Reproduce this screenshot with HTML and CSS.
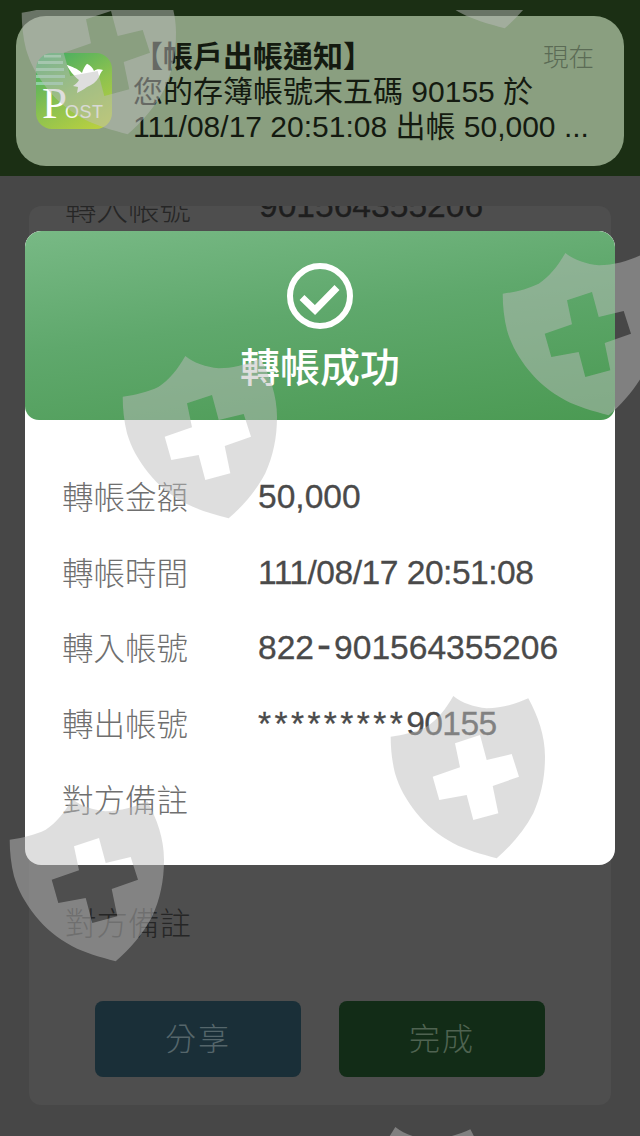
FILE: index.html
```html
<!DOCTYPE html>
<html lang="zh-Hant">
<head>
<meta charset="utf-8">
<title>轉帳成功</title>
<link rel="stylesheet" href="styles.css">
</head>
<body>
<svg class="defs" width="0" height="0" aria-hidden="true">
  <symbol id="shield" viewBox="0 0 160 170">
    <path fill-rule="evenodd" d="M63.3 0C72 7 84 11 96.7 12.3C112 12 126 8 138.3 2.3C148 20 155 40 155 60.7C155 82 151 100 143.3 117.3C134 135 121 150 106.7 162.3C91 158 76 154 63.3 147.3C48 139 36 129 26.7 117.3C16 104 9 91 5 77.3C2 65 0.7 53 0.7 40.7C13 39 26 36 36.7 30.7C47 24 56 13 63.3 0ZM65 47.3L90 39L96.7 64L121.7 58L129 80.7L102.7 90L108.3 117.3L83.3 124L76.7 99L49.3 104L42.7 80.7L70 71.3Z"/>
  </symbol>
</svg>
<div class="app">
  <header class="topbar"></header>
  <main class="page">
    <section class="card">
      <div class="row row-clipped">
        <span class="back-label">轉入帳號</span>
        <span class="back-value">901564355206</span>
      </div>
      <div class="row row-note">
        <span class="back-label">對方備註</span>
      </div>
      <div class="actions">
        <button class="btn btn-share">分享</button>
        <button class="btn btn-done">完成</button>
      </div>
    </section>
  </main>
</div>

<section class="modal">
  <div class="modal-head">
    <svg class="check" viewBox="0 0 66 66">
      <circle cx="33" cy="33" r="30" fill="none" stroke="#fff" stroke-width="6"/>
      <path d="M15 34.500L28 47L50 24.500" fill="none" stroke="#fff" stroke-width="7"/>
    </svg>
    <h1 class="modal-title">轉帳成功</h1>
  </div>
  <dl class="details">
    <div class="detail"><dt>轉帳金額</dt><dd>50,000</dd></div>
    <div class="detail"><dt>轉帳時間</dt><dd class="value-time">111/08/17 20:51:08</dd></div>
    <div class="detail"><dt>轉入帳號</dt><dd>822<span class="value-hyphen">-</span>901564355206</dd></div>
    <div class="detail"><dt>轉出帳號</dt><dd class="value-account"><span class="value-stars">*********</span>90155</dd></div>
    <div class="detail"><dt>對方備註</dt><dd></dd></div>
  </dl>
</section>

<aside class="notice">
  <svg class="app-icon" viewBox="0 0 76 76">
    <defs>
      <linearGradient id="icon-bg" x1="0.2" y1="0" x2="0.8" y2="1">
        <stop offset="0" stop-color="#45ad62"/>
        <stop offset="0.55" stop-color="#8ec24f"/>
        <stop offset="1" stop-color="#b9d040"/>
      </linearGradient>
    </defs>
    <rect width="76" height="76" rx="16" fill="url(#icon-bg)"/>
    <g fill="#8fd0a2">
      <rect x="8" y="2" width="17" height="2.500"/>
      <rect x="2" y="8" width="25" height="3"/>
      <rect x="0" y="15" width="28" height="3"/>
      <rect x="0" y="22" width="29" height="3"/>
      <rect x="0" y="29" width="27" height="3"/>
    </g>
    <path fill="#fff" d="M30.700 11.700C36 14 41 15 46 20C47 16 49 13 51 10.700C54 12 57 15 58 18C60 16 64 16 67 17C65 19 64 21 63 24C60 29 56 32 51 34C47 37 44 38 41 40L42 34L37 33C40 31 42 29 43 27C38 23 33 17 30.700 11.700Z"/>
    <text class="icon-p" x="6" y="65">P</text>
    <text class="icon-ost" x="29" y="65">OST</text>
  </svg>
  <div class="notice-body">
    <div class="notice-head">
      <strong class="notice-title">【帳戶出帳通知】</strong>
      <span class="notice-time">現在</span>
    </div>
    <p class="notice-line">您的存簿帳號末五碼 90155 於</p>
    <p class="notice-line">111/08/17 20:51:08 出帳 50,000 ...</p>
  </div>
</aside>

<div class="watermarks" aria-hidden="true">
  <svg class="mark mark-a"><use href="#shield"/></svg>
  <svg class="mark mark-b"><use href="#shield"/></svg>
  <svg class="mark mark-c"><use href="#shield"/></svg>
  <svg class="mark mark-d"><use href="#shield"/></svg>
  <svg class="mark mark-e"><use href="#shield"/></svg>
  <svg class="mark mark-f"><use href="#shield"/></svg>
  <svg class="mark mark-g"><use href="#shield"/></svg>
</div>
</body>
</html>
```
FILE: styles.css
```css
* { box-sizing: border-box; }
html, body { margin: 0; padding: 0; }
body {
  position: relative;
  width: 640px;
  height: 1136px;
  overflow: hidden;
  background: #474747;
  font-family: "Liberation Sans", "Noto Sans CJK TC", sans-serif;
}
.defs { position: absolute; }
.app { display: flex; flex-direction: column; height: 1136px; }
.topbar { height: 176px; background: #1b2f14; }
.page { flex: 1; padding: 30px 29px 31px; display: flex; }
.card {
  flex: 1;
  display: flex;
  flex-direction: column;
  background: #4e4e4e;
  border-radius: 12px;
  overflow: hidden;
}
.row { display: flex; align-items: center; height: 40px; padding-left: 36px; }
.row-clipped { margin-top: -20px; }
.row-note { margin-top: 675px; }
.back-label {
  width: 194px;
  font-size: 31.500px;
  font-family: "Noto Sans CJK TC", sans-serif;
  font-weight: 300;
  color: #262626;
}
.back-value { font-size: 33.600px; color: #1e1e1e; -webkit-text-stroke: 0.3px #1e1e1e; }
.actions { display: flex; gap: 38px; padding-left: 66px; margin-top: 60px; }
.btn {
  width: 206px;
  height: 76px;
  padding: 0 0 5px;
  border: 0;
  border-radius: 8px;
  font-family: "Noto Sans CJK TC", sans-serif;
  font-weight: 300;
  font-size: 31px;
  letter-spacing: 2px;
}
.btn-share { background: #1a2f38; color: #55666b; }
.btn-done { background: #122c17; color: #4f6351; }

.modal {
  position: absolute;
  left: 25px;
  top: 231px;
  width: 590px;
  height: 634px;
  background: #fff;
  border-radius: 16px;
  overflow: hidden;
}
.modal-head {
  height: 189px;
  display: flex;
  flex-direction: column;
  align-items: center;
  padding-top: 32px;
  background: linear-gradient(172deg, #78b985 0%, #5fa86c 45%, #4b9a53 100%);
  border-radius: 16px 16px 14px 14px;
}
.check { width: 66px; height: 66px; display: block; }
.modal-title {
  margin: 13px 0 0;
  font-family: "Noto Sans CJK TC", sans-serif;
  font-weight: 500;
  font-size: 40px;
  line-height: 46px;
  color: #fff;
}
.details { margin: 0; padding: 39px 0 0 37px; }
.detail { display: flex; align-items: center; height: 75.800px; }
.detail dt {
  width: 196px;
  margin-top: -4px;
  font-family: "Noto Sans CJK TC", sans-serif;
  font-weight: 300;
  font-size: 31.500px;
  color: #6f6f6f;
}
.detail dd {
  margin: 0;
  height: 40px;
  line-height: 40px;
  font-size: 33.600px;
  color: #4a4a4a;
  -webkit-text-stroke: 0.3px #4a4a4a;
}
.detail .value-time { letter-spacing: -0.5px; }
.detail .value-account { letter-spacing: -0.6px; }
.value-hyphen { padding: 0 3px; font-size: 42px; line-height: 0; }
.value-stars { letter-spacing: 3.400px; }

.notice {
  position: absolute;
  left: 16px;
  top: 16px;
  width: 608px;
  height: 150px;
  display: flex;
  padding: 37px 30px 0 20px;
  background: #8a9f80;
  border-radius: 30px;
}
.app-icon { width: 76px; height: 76px; flex: none; display: block; }
.icon-p { font-family: "Liberation Serif", serif; font-size: 45px; fill: #fff; }
.icon-ost { font-family: "Liberation Sans", sans-serif; font-size: 18px; fill: #f4f6ee; letter-spacing: 0.5px; }
.notice-body { flex: 1; margin: -18px 0 0 21px; color: #141a10; }
.notice-head { display: flex; justify-content: space-between; align-items: center; height: 39px; }
.notice-title { font-family: "Noto Sans CJK TC", sans-serif; font-weight: 700; font-size: 30px; line-height: 39px; white-space: nowrap; }
.notice-time {
  font-family: "Noto Sans CJK TC", sans-serif;
  font-weight: 300;
  font-size: 25.500px;
  color: #5b6b55;
}
.notice-line {
  margin: 0;
  height: 35px;
  line-height: 35px;
  white-space: nowrap;
  font-size: 30px;
  font-family: "Liberation Sans", "Noto Sans CJK TC", sans-serif;
}

.watermarks {
  position: absolute;
  left: 0;
  top: 10px;
  width: 640px;
  height: 1126px;
  overflow: hidden;
  pointer-events: none;
}
.mark { position: absolute; width: 160px; height: 170px; fill: rgba(188, 188, 188, 0.49); }
.mark-a { left: 122px; top: 346px; }
.mark-b { left: 502px; top: 243px; }
.mark-c { left: 390px; top: 686px; }
.mark-d { left: 9px; top: 789px; }
.mark-e { left: 21px; top: -38px; }
.mark-f { left: 398px; top: -144px; }
.mark-g { left: 332px; top: 1117px; }
```
